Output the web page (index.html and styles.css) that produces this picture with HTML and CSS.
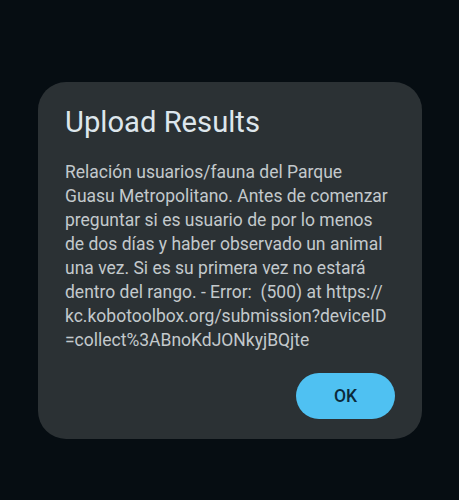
FILE: index.html
```html
<!DOCTYPE html>
<html lang="es">
<head>
<meta charset="utf-8">
<title>Upload Results</title>
<link rel="stylesheet" href="styles.css">
</head>
<body>
<div class="screen">
  <div class="dialog" role="dialog">
    <h1 class="title">Upload Results</h1>
    <p class="message">Relación usuarios/fauna del Parque<br>Guasu Metropolitano. Antes de comenzar<br>preguntar si es usuario de por lo menos<br>de dos días y haber observado un animal<br>una vez. Si es su primera vez no estará<br>dentro del rango. - Error:&nbsp; (500) at https://<br>kc.kobotoolbox.org/submission?deviceID<br>=collect%3ABnoKdJONkyjBQjte</p>
    <div class="actions">
      <button class="btn-ok">OK</button>
    </div>
  </div>
</div>
</body>
</html>
```

FILE: styles.css
```css
html, body {
  margin: 0;
  padding: 0;
  background: #060d12;
  font-family: Roboto, "Noto Sans", sans-serif;
}
.screen {
  width: 459px;
  height: 500px;
  padding-top: 82px;
  box-sizing: border-box;
}
.dialog {
  margin-left: 38px;
  width: 384px;
  height: 357px;
  box-sizing: border-box;
  background: #2b3134;
  border-radius: 28px;
  padding: 22px 27px 20px 27px;
  display: flex;
  flex-direction: column;
}
.title {
  margin: 0;
  font-size: 29.2px;
  line-height: 36px;
  font-weight: 400;
  color: #dde6ec;
}
.message {
  margin: 20px 0 0 0;
  font-size: 17.5px;
  line-height: 24px;
  color: #c3c9cc;
  white-space: nowrap;
}
.actions {
  margin-top: auto;
  display: flex;
  justify-content: flex-end;
}
.btn-ok {
  width: 99px;
  height: 46px;
  border: none;
  border-radius: 23px;
  background: #4fc1f2;
  color: #0b2a3a;
  font-family: Roboto, sans-serif;
  font-size: 17.5px;
  font-weight: 500;
  padding: 0;
}
```
